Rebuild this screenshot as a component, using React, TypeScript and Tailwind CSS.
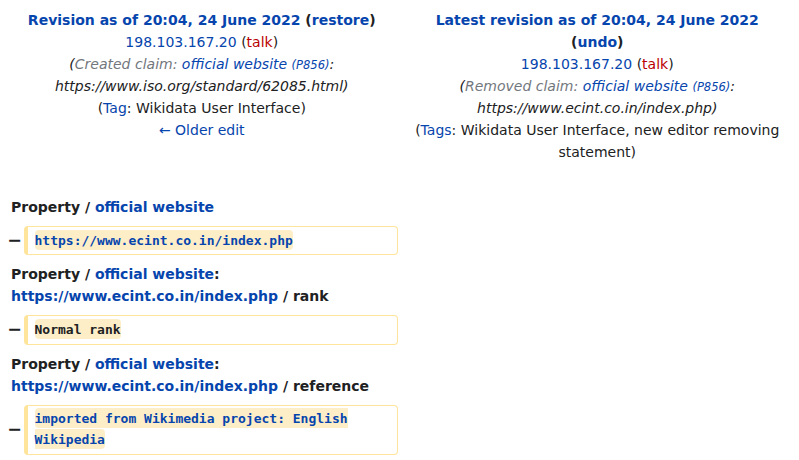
const blue = "text-[#0645ad]";

function Marker() {
  return (
    <div className="w-[16px] shrink-0 text-right text-[17.5px] font-bold leading-[1.2] text-[#202122]">
      −
    </div>
  );
}

function DeletedBox({ children }: { children: React.ReactNode }) {
  return (
    <div className="flex items-center">
      <Marker />
      <div className="ml-[2px] min-w-0 flex-1 rounded-[4px] border border-l-4 border-[#ffe49c] px-[6.5px] py-[3.25px] font-['DejaVu_Sans_Mono',monospace] text-[13px] leading-[1.6]">
        {children}
      </div>
    </div>
  );
}

function Change({ link, children }: { link?: boolean; children: React.ReactNode }) {
  return (
    <span
      className={
        link
          ? "rounded-[4px] bg-[#feeec8] py-[2.5px] font-bold text-[#0645ad]"
          : "rounded-[4px] bg-[#feeec8] py-[2.5px] font-bold text-[#202122]"
      }
    >
      {children}
    </span>
  );
}

export default function App() {
  return (
    <div className="min-h-[460px] bg-white px-[6px] pt-[9px] font-['DejaVu_Sans',sans-serif] text-[14px] leading-[22px] text-[#202122]">
      {/* revision titles */}
      <div className="grid grid-cols-2 gap-[4px]">
        <div className="px-[10px] text-center">
          <div className="font-bold">
            <a className={blue}>Revision as of 20:04, 24 June 2022</a> (<a className={blue}>restore</a>)
          </div>
          <div>
            <a className={blue}>198.103.167.20</a> (<a className="text-[#ba0000]">talk</a>)
          </div>
          <div className="italic">
            (<span className="text-[#72777d]">Created claim: </span>
            <a className={blue}>official website</a>{" "}
            <span className="text-[11.5px] leading-none text-[#0645ad]">(P856)</span>: https://www.iso.org/standard/62085.html)
          </div>
          <div>
            (<a className={blue}>Tag</a>: Wikidata User Interface)
          </div>
          <div>
            <a className={blue}>← Older edit</a>
          </div>
        </div>
        <div className="px-[10px] text-center">
          <div className="font-bold">
            <a className={blue}>Latest revision as of 20:04, 24 June 2022</a> (<a className={blue}>undo</a>)
          </div>
          <div>
            <a className={blue}>198.103.167.20</a> (<a className="text-[#ba0000]">talk</a>)
          </div>
          <div className="italic">
            (<span className="text-[#72777d]">Removed claim: </span>
            <a className={blue}>official website</a>{" "}
            <span className="text-[11.5px] leading-none text-[#0645ad]">(P856)</span>: https://www.ecint.co.in/index.php)
          </div>
          <div>
            (<a className={blue}>Tags</a>: Wikidata User Interface, new editor removing statement)
          </div>
        </div>
      </div>

      {/* diff body */}
      <div className="mt-[33px] grid grid-cols-2 gap-[4px]">
        <div className="flex flex-col gap-[8px]">
          <div className="pl-[5px] font-bold">
            Property / <a className={blue}>official website</a>
          </div>
          <DeletedBox>
            <Change link>https://www.ecint.co.in/index.php</Change>
          </DeletedBox>
          <div className="pl-[5px] font-bold">
            Property / <a className={blue}>official website</a>:{" "}
            <a className={blue}>https://www.ecint.co.in/index.php</a> / rank
          </div>
          <DeletedBox>
            <Change>Normal rank</Change>
          </DeletedBox>
          <div className="pl-[5px] font-bold">
            Property / <a className={blue}>official website</a>:{" "}
            <a className={blue}>https://www.ecint.co.in/index.php</a> / reference
          </div>
          <DeletedBox>
            <Change link>imported from Wikimedia project: English Wikipedia</Change>
          </DeletedBox>
        </div>
        <div />
      </div>
    </div>
  );
}
